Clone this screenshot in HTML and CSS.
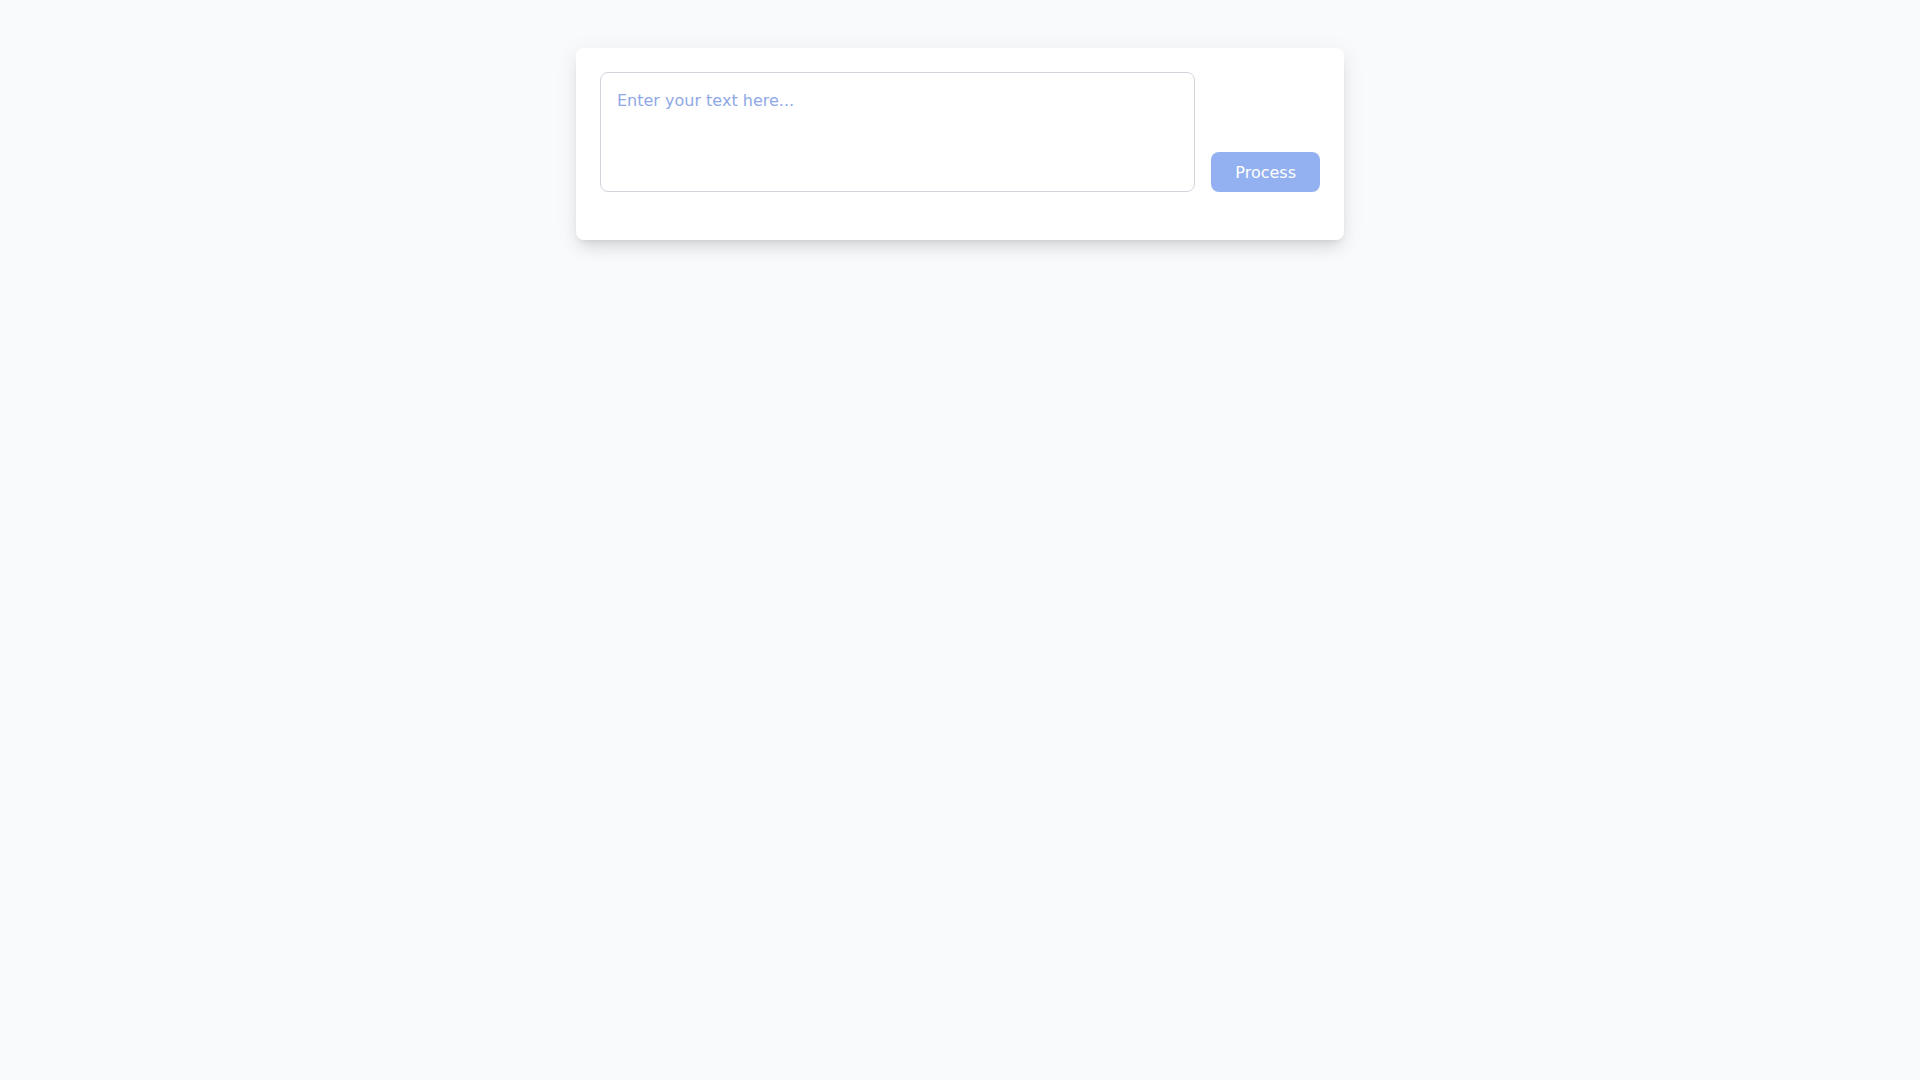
FILE: index.html
```html
<!doctype html>
<html>

<head>
    <meta charset="utf-8">
    <title>Text Processor</title>
    <link rel="stylesheet" href="styles.css">
</head>

<body>
<!--Main card-->
<div class="card">
    <div class="inputRow">
        <textarea class="textInput" placeholder="Enter your text here..."></textarea>
        <button type="button" class="processBtn" disabled>Process</button>
    </div>
    <!--Result area, empty until processed-->
    <div class="result"></div>
</div>
</body>

</html>
```

FILE: styles.css
```css
body{margin:0; padding-top:48px; min-height:100vh; box-sizing:border-box; background-color:#f9fafb; font-family:"DejaVu Sans", sans-serif;}
.card{width:768px; margin:0 auto; box-sizing:border-box; padding:24px; background-color:#fff; border-radius:8px; box-shadow:0 10px 15px -3px rgba(0,0,0,0.1), 0 4px 6px -4px rgba(0,0,0,0.1), 0 4px 24px 2px rgba(0,0,0,0.05);}
.inputRow{display:flex; align-items:flex-end; gap:16px;}
.textInput{flex:1; height:120px; box-sizing:border-box; padding:16px; border:1px solid #d1d5db; border-radius:8px; font-family:inherit; font-size:16px; line-height:24px; resize:none; outline:none;}
.textInput::placeholder{color:#8fa8e6; opacity:1;}
.processBtn{height:40px; padding:0 24px; border:none; border-radius:8px; background-color:#93b1f0; color:#fff; font-family:inherit; font-size:16px;}
.result{margin-top:24px;}
```
